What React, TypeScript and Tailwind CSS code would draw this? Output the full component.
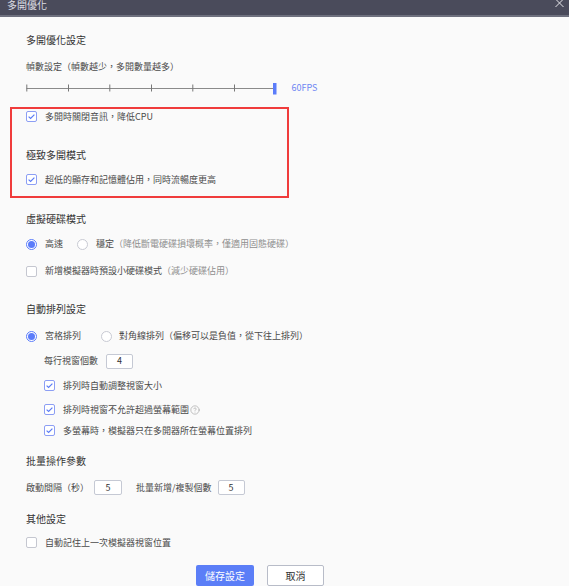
import React from "react";
import { CircleHelp } from "lucide-react";

const FONT = '"Noto Sans CJK TC", "Noto Sans", "Liberation Sans", sans-serif';

function Check({ checked }: { checked?: boolean }) {
  return checked ? (
    <span className="w-[11px] h-[11px] shrink-0 rounded-[2px] border border-[#8c9ef4] bg-white flex items-center justify-center">
      <svg width="9" height="9" viewBox="0 0 9 9">
        <path d="M1.6 4.6 L3.6 6.5 L7.4 2.6" fill="none" stroke="#5b7cf5" strokeWidth="1.2" />
      </svg>
    </span>
  ) : (
    <span className="block w-[11px] h-[11px] shrink-0 rounded-[2px] border border-[#c5c7d0] bg-white" />
  );
}

function Radio({ checked }: { checked?: boolean }) {
  return checked ? (
    <span className="w-[11px] h-[11px] shrink-0 rounded-full border border-[#5b7cfa] bg-white flex items-center justify-center">
      <span className="block w-[7px] h-[7px] rounded-full bg-[#5b7cfa]" />
    </span>
  ) : (
    <span className="block w-[11px] h-[11px] shrink-0 rounded-full border border-[#c8cad3] bg-white" />
  );
}

function NumBox({ v, w }: { v: string; w: string }) {
  return (
    <span
      className={
        w === "28"
          ? "w-[28px] h-[15px] border border-[#c5c9d4] rounded-[2px] bg-white text-[9px] text-[#333] flex items-center justify-center"
          : "w-[27px] h-[15px] border border-[#c5c9d4] rounded-[2px] bg-white text-[9px] text-[#333] flex items-center justify-center"
      }
    >
      {v}
    </span>
  );
}

export default function App() {
  return (
    <div
      className="w-[569px] h-[586px] bg-[#fafafa] relative overflow-hidden"
      style={{ fontFamily: FONT }}
    >
      {/* header */}
      <div className="h-[17px] bg-[#4a4b5b] border-b-2 border-[#6e707e] flex items-start justify-between pl-[7px] pr-[5px]">
        <span className="text-[10px] leading-[11px] text-[#dcdde3] -mt-[1px]">多開優化</span>
        <svg width="9" height="8" viewBox="0 0 9 8" className="-mt-[1px]">
          <path d="M0.5 0 L8.5 8 M8.5 0 L0.5 8" stroke="#e6e6ea" strokeWidth="1" />
        </svg>
      </div>

      <div className="pl-[26px] flex flex-col text-[9px] text-[#4a4a4a]">
        <div className="mt-[15.5px] h-[14px] flex items-center text-[10px] text-[#333]">多開優化設定</div>

        <div className="mt-[13.5px] h-[14px] flex items-center">幀數設定（幀數越少，多開數量越多）</div>

        <div className="mt-[7px] h-[14px] flex items-center">
          <svg width="252" height="13" viewBox="0 0 252 13">
            <line x1="0.5" y1="6.5" x2="249" y2="6.5" stroke="#8a8a8a" strokeWidth="1" />
            <line x1="0.8" y1="2.5" x2="0.8" y2="9.5" stroke="#777" strokeWidth="1" />
            <line x1="42.5" y1="2.5" x2="42.5" y2="9.5" stroke="#777" strokeWidth="1" />
            <line x1="83.8" y1="2.5" x2="83.8" y2="9.5" stroke="#777" strokeWidth="1" />
            <line x1="125.5" y1="2.5" x2="125.5" y2="9.5" stroke="#777" strokeWidth="1" />
            <line x1="166.8" y1="2.5" x2="166.8" y2="9.5" stroke="#777" strokeWidth="1" />
            <line x1="208.5" y1="2.5" x2="208.5" y2="9.5" stroke="#777" strokeWidth="1" />
            <rect x="247" y="1" width="3.5" height="11.5" fill="#5b7cfa" />
          </svg>
          <span className="ml-[13.5px] text-[#6f87f3]">60FPS</span>
        </div>

        <div className="mt-[14.5px] h-[14px] flex items-center gap-[8px]">
          <Check checked />
          <span>多開時關閉音訊，降低CPU</span>
        </div>

        <div className="mt-[23.5px] h-[14px] flex items-center text-[10px] text-[#333]">極致多開模式</div>

        <div className="mt-[11.5px] h-[14px] flex items-center gap-[8px]">
          <Check checked />
          <span>超低的顯存和記憶體佔用，同時流暢度更高</span>
        </div>

        <div className="mt-[25px] h-[14px] flex items-center text-[10px] text-[#333]">虛擬硬碟模式</div>

        <div className="mt-[11.5px] h-[14px] flex items-center">
          <Radio checked />
          <span className="ml-[8px]">高速</span>
          <span className="ml-[14px] flex"><Radio /></span>
          <span className="ml-[8px]">穩定</span>
          <span className="text-[#8e8e8e]">（降低斷電硬碟損壞概率，僅適用固態硬碟）</span>
        </div>

        <div className="mt-[13px] h-[14px] flex items-center gap-[8px]">
          <Check />
          <span>
            新增模擬器時預設小硬碟模式<span className="text-[#8e8e8e]">（減少硬碟佔用）</span>
          </span>
        </div>

        <div className="mt-[23.5px] h-[14px] flex items-center text-[10px] text-[#333]">自動排列設定</div>

        <div className="mt-[13.5px] h-[14px] flex items-center">
          <Radio checked />
          <span className="ml-[8px]">宮格排列</span>
          <span className="ml-[20px] flex"><Radio /></span>
          <span className="ml-[7px]">對角線排列（偏移可以是負值，從下往上排列）</span>
        </div>

        <div className="mt-[10.5px] h-[15px] flex items-center pl-[18px] gap-[8px]">
          <span>每行視窗個數</span>
          <NumBox v="4" w="27" />
        </div>

        <div className="mt-[10px] h-[14px] flex items-center pl-[18px] gap-[8px]">
          <Check checked />
          <span>排列時自動調整視窗大小</span>
        </div>

        <div className="mt-[10px] h-[14px] flex items-center pl-[18px] gap-[8px]">
          <Check checked />
          <span className="flex items-center gap-[1px]">
            排列時視窗不允許超過螢幕範圍
            <CircleHelp size={10} strokeWidth={1.4} color="#9a9a9a" />
          </span>
        </div>

        <div className="mt-[7px] h-[14px] flex items-center pl-[18px] gap-[8px]">
          <Check checked />
          <span>多螢幕時，模擬器只在多開器所在螢幕位置排列</span>
        </div>

        <div className="mt-[15.5px] h-[14px] flex items-center text-[10px] text-[#333]">批量操作參數</div>

        <div className="mt-[13px] h-[15px] flex items-center">
          <span>啟動間隔（秒）</span>
          <span className="ml-[5px] flex"><NumBox v="5" w="28" /></span>
          <span className="ml-[14px]">批量新增/複製個數</span>
          <span className="ml-[6px] flex"><NumBox v="5" w="27" /></span>
        </div>

        <div className="mt-[16.5px] h-[14px] flex items-center text-[10px] text-[#333]">其他設定</div>

        <div className="mt-[10.3px] h-[14px] flex items-center gap-[8px]">
          <Check />
          <span>自動記住上一次模擬器視窗位置</span>
        </div>

        <div className="mt-[15px] flex items-center pl-[170px] gap-[13px]">
          <button className="w-[58px] h-[21px] rounded-[2px] bg-[#5b7ef7] text-white text-[10px] flex items-center justify-center">
            儲存設定
          </button>
          <button className="w-[57px] h-[21px] rounded-[2px] bg-white border border-[#b8bcc8] text-[#333] text-[10px] flex items-center justify-center">
            取消
          </button>
        </div>
      </div>

      {/* highlight box */}
      <div className="absolute left-[9.5px] top-[107px] w-[279.5px] h-[91px] border-2 border-[#f03c3c] pointer-events-none" />
    </div>
  );
}
